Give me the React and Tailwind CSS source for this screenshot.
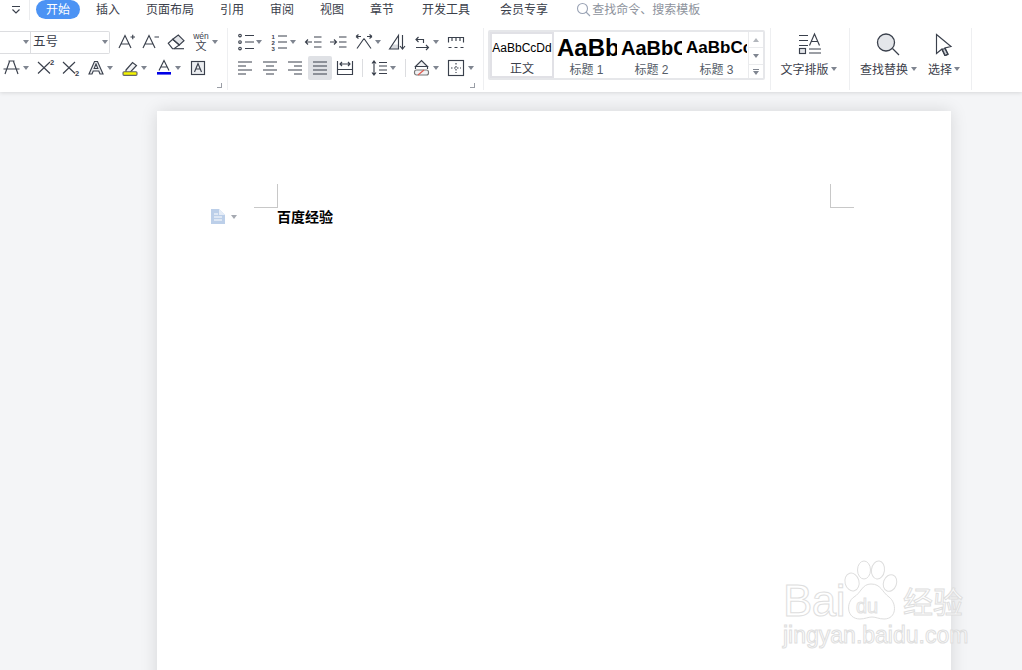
import React from 'react';

const INK = '#3a404c';

function Caret({ className = '' }) {
    return <span className={`block w-0 h-0 shrink-0 border-x-[3px] border-t-[4px] border-x-transparent border-t-[#7f8590] ${className}`} />;
}

function Icon({ w = 18, h = 18, className = '', children }) {
    return (
        <svg width={w} height={h} viewBox={`0 0 ${w} ${h}`} fill="none" stroke={INK} strokeWidth="1.15" className={`block shrink-0 ${className}`}>
            {children}
        </svg>
    );
}

function Tab({ children, className = '' }) {
    return <span className={`h-[19px] flex items-center whitespace-nowrap ${className}`}>{children}</span>;
}

function Row({ children, className = '' }) {
    return <div className={`flex items-center h-[26px] ${className}`}>{children}</div>;
}

function StyleCard({ sample, label, sampleClass }) {
    return (
        <div className="flex flex-col items-center shrink-0 px-[2px] w-[65px] h-[46px]">
            <div className={`w-full h-[30px] shrink-0 pt-[2px] overflow-hidden whitespace-nowrap flex items-center text-black ${sampleClass}`}>{sample}</div>
            <div className="h-[15px] flex items-center text-[12px] text-[#555d68]">{label}</div>
        </div>
    );
}

function Watermark() {
    return (
        <div className="absolute left-[783px] top-[560px] w-[190px] h-[92px] select-none [font-family:'Liberation_Sans','Noto_Sans_CJK_SC',sans-serif] text-[#ffffffd0] [-webkit-text-stroke:1px_#dedede]">
            <div className="flex items-start h-[62px]">
                <span className="mt-[16px] text-[44px] leading-[50px] tracking-[-0.5px]">Bai</span>
                <svg width="58" height="62" viewBox="0 0 58 62" fill="#ffffffd0" stroke="#dedede" strokeWidth="1" className="block shrink-0 ml-[-2px]">
                    <ellipse cx="9" cy="22" rx="7" ry="9" transform="rotate(-15 9 22)" />
                    <ellipse cx="21" cy="10" rx="6.5" ry="9" />
                    <ellipse cx="35" cy="10" rx="6.5" ry="9" transform="rotate(8 35 10)" />
                    <ellipse cx="47" cy="23" rx="6.5" ry="8.5" transform="rotate(20 47 23)" />
                    <path d="M28 24c-9 0-10 9-17 13-8 5-8 22 6 22 5 0 8-2 12-2s7 2 12 2c13 0 13-16 5-22-7-5-8-13-18-13z" />
                    <text x="13" y="53" fontSize="20" fontFamily="Liberation Sans" stroke="#e2e2e2" fill="#ffffff">du</text>
                </svg>
                <span className="mt-[25px] ml-[2px] text-[30px] leading-[36px] whitespace-nowrap">经验</span>
            </div>
            <div className="text-[23px] leading-[26px] whitespace-nowrap">jingyan.baidu.com</div>
        </div>
    );
}

export default function App() {
    return (
        <div className="relative w-[1022px] h-[670px] overflow-hidden bg-[#f4f5f7] text-[12px] text-[#3b404b] [font-family:'Liberation_Sans','Noto_Sans_CJK_SC',sans-serif]">
            <header className="relative z-10 h-[92px] bg-white shadow-[0_1px_4px_rgba(0,0,0,0.12)]">
                {/* tabs */}
                <div className="flex items-start h-[28px]">
                    <div className="w-[30px] h-[20px] flex items-center justify-center border-r border-[#ebecee] pl-[2px]">
                        <Icon w={10} h={10}>
                            <path d="M1 1.500h8M1.500 4.500L5 8l3.500-3.500" />
                        </Icon>
                    </div>
                    <Tab className="ml-[6px] w-[44px] justify-center rounded-full bg-[#4c93f4] text-white">开始</Tab>
                    <Tab className="ml-[16px]">插入</Tab>
                    <Tab className="ml-[26px]">页面布局</Tab>
                    <Tab className="ml-[26px]">引用</Tab>
                    <Tab className="ml-[26px]">审阅</Tab>
                    <Tab className="ml-[26px]">视图</Tab>
                    <Tab className="ml-[26px]">章节</Tab>
                    <Tab className="ml-[28px]">开发工具</Tab>
                    <Tab className="ml-[30px]">会员专享</Tab>
                    <Tab className="ml-[28px] text-[#8d929c]">
                        <svg width="15" height="15" viewBox="0 0 15 15" fill="none" stroke="#9aa3b5" strokeWidth="1.1" className="block mr-[1px]">
                            <circle cx="6.500" cy="6.500" r="5" />
                            <path d="M10 10l4 4" />
                        </svg>
                        查找命令、搜索模板
                    </Tab>
                </div>

                {/* ribbon */}
                <div className="flex h-[62px]">
                    {/* font group */}
                    <div className="relative w-[228px] shrink-0 border-r border-[#eeeff1] pt-[1px]">
                        <Row>
                            <div className="flex items-center w-[110px] h-[23px] border border-l-0 border-[#dcdde0] rounded-r-[2px]">
                                <div className="w-[31px] h-full flex items-center border-r border-[#dcdde0] pl-[23px]">
                                    <Caret />
                                </div>
                                <span className="ml-[2px] w-[65px] text-[12.5px]">五号</span>
                                <Caret className="ml-[4px]" />
                            </div>
                            <Icon w={20} h={20} className="ml-[6px]">
                                <path d="M3 16L9 3.500 15 16M5.200 12h7.600M14.500 5h4.500M16.750 2.800v4.500" />
                            </Icon>
                            <Icon w={20} h={20} className="ml-[4px]">
                                <path d="M3 16L9 3.500 15 16M5.200 12h7.600M14.500 5h4.500" />
                            </Icon>
                            <Icon w={20} h={20} className="ml-[6px]">
                                <path d="M6.700 7.300L12.300 3 18 8.700l-4.700 4.300z" fill="#e4e6ea" />
                                <path d="M2.300 11.300l4.400-4 6.600 5.700L8 16.700H6.500z" />
                                <path d="M8 16.700h10" />
                            </Icon>
                            <div className="ml-[5px] w-[20px] flex flex-col items-center leading-none text-[#3a404c]">
                                <span className="text-[8.5px] leading-[9px]">wén</span>
                                <span className="text-[11px] leading-[11px]">文</span>
                            </div>
                            <Caret className="ml-[1px]" />
                        </Row>
                        <Row>
                            <Icon w={20} h={20} className="ml-[1px]">
                                <path d="M7.500 3h6M8.500 3.500L4 16M12.500 3.500L17 16M2.500 11h16" />
                            </Icon>
                            <Caret className="ml-[2px]" />
                            <Icon w={20} h={20} className="ml-[6px]">
                                <path d="M3 4l12 11.500M15 4L3 15.500" />
                                <text x="15" y="7" fontSize="7.500" fontWeight="700" fill={INK} stroke="none">2</text>
                            </Icon>
                            <Icon w={20} h={20} className="ml-[6px]">
                                <path d="M2 4l12 11.500M14 4L2 15.500" />
                                <text x="14" y="17.500" fontSize="7.500" fontWeight="700" fill={INK} stroke="none">2</text>
                            </Icon>
                            <Icon w={20} h={20} className="ml-[5px]">
                                <path d="M3 16L8.500 3.500h3L17 16h-3l-1.200-3H7.200L6 16zM8.200 10.500h3.600L10 6z" fill="#eceef1" />
                            </Icon>
                            <Caret className="ml-[1px]" />
                            <Icon w={20} h={20} className="ml-[7px]">
                                <path d="M6 12l6.500-7.500 4 3-6.500 7H6z" fill="#f1f2f4" />
                                <rect x="3" y="13.700" width="14" height="3.600" rx="1" fill="#f5f500" stroke="#666" />
                            </Icon>
                            <Caret className="ml-[1px]" />
                            <Icon w={20} h={20} className="ml-[6px]">
                                <path d="M6 12.500L11 2.500l5 10M7.800 9h6.400" />
                                <path d="M4 15.300h14" stroke="#0000e6" strokeWidth="2.600" />
                            </Icon>
                            <Caret className="ml-[2px]" />
                            <Icon w={20} h={20} className="ml-[7px]">
                                <rect x="3.500" y="3.500" width="13" height="13" fill="#eceef1" />
                                <path d="M6.500 14L10 5.500l3.500 8.500M7.700 11h4.600" />
                            </Icon>
                        </Row>
                        <span className="absolute right-[5px] bottom-[2px] w-[5px] h-[5px] border-r border-b border-[#9a9ea6]" />
                    </div>

                    {/* paragraph group */}
                    <div className="relative w-[256px] shrink-0 border-r border-[#eeeff1] pt-[1px]">
                        <Row>
                            <Icon className="ml-[9px]">
                                <circle cx="3" cy="2.500" r="1.300" />
                                <circle cx="3" cy="9" r="1.300" />
                                <circle cx="3" cy="15.500" r="1.300" />
                                <path d="M8 2.500h9M8 9h9M8 15.500h9" />
                            </Icon>
                            <Caret className="ml-[1px]" />
                            <Icon className="ml-[8px]">
                                <text x="1.500" y="5.500" fontSize="6" fontWeight="700" fill={INK} stroke="none">1</text>
                                <text x="1.500" y="11.500" fontSize="6" fontWeight="700" fill={INK} stroke="none">2</text>
                                <text x="1.500" y="17.500" fontSize="6" fontWeight="700" fill={INK} stroke="none">3</text>
                                <path d="M8 3h9M8 9h9M8 15h9" />
                            </Icon>
                            <Caret className="ml-[2px]" />
                            <Icon className="ml-[8px]">
                                <path d="M10 4h7.500M10 9h7.500M10 14h7.500M1.500 9h6.500M4 6.500L1.500 9 4 11.500" />
                            </Icon>
                            <Icon className="ml-[7px]">
                                <path d="M10 4h7.500M10 9h7.500M10 14h7.500M1 9h6.500M5 6.500L7.500 9 5 11.500" />
                            </Icon>
                            <Icon className="ml-[8px]">
                                <path d="M1 3.500h5M12 3.500h5M1 3.500l2.500-2M1 3.500l2.500 2M17 3.500l-2.500-2M17 3.500l-2.500 2M9 5.500L2 15.500M9 5.500l7 10" />
                            </Icon>
                            <Caret className="ml-[2px]" />
                            <Icon className="ml-[7px]">
                                <path d="M4.500 11.500h6V16H1.500z" fill="#d9dbdf" stroke="none" />
                                <path d="M1.500 16L10.500 2.500V16zM14.500 2v13.500M12 13l2.500 3 2.500-3" />
                            </Icon>
                            <Icon className="ml-[7px]">
                                <path d="M3 6.500h7.500V10M5.500 4L3 6.500 5.500 9M3 14.500h12.500M13 12l2.500 2.500L13 17" />
                            </Icon>
                            <Caret className="ml-[2px]" />
                            <Icon className="ml-[8px]">
                                <path d="M1.500 9.500v-5h15v5M5 5v3M9 5v3M13 5v3M1.500 14.500h3M7.500 14.500h3M13.500 14.500h3" />
                            </Icon>
                        </Row>
                        <Row>
                            <Icon className="ml-[8px]">
                                <path d="M2 3h14M2 7h8M2 11h14M2 15h8" />
                            </Icon>
                            <Icon className="ml-[7px]">
                                <path d="M2 3h14M5 7h8M2 11h14M5 15h8" />
                            </Icon>
                            <Icon className="ml-[7px]">
                                <path d="M2 3h14M8 7h8M2 11h14M8 15h8" />
                            </Icon>
                            <div className="ml-[4px] w-[24px] h-[24px] flex items-center justify-center rounded-[2px] bg-[#dfe1e5]">
                                <Icon>
                                    <path d="M2 3h14M2 7h14M2 11h14M2 15h14" />
                                </Icon>
                            </div>
                            <Icon className="ml-[4px]">
                                <path d="M1.500 2v14M16.500 2v14M4 5h10M6 3L4 5l2 2M12 3l2 2-2 2M1.500 10.500h15M1.500 15.500h15" />
                            </Icon>
                            <span className="ml-[8px] w-px h-[18px] bg-[#dcdde0]" />
                            <Icon className="ml-[7px]">
                                <path d="M4 2v14M2 4.500L4 2l2 2.500M2 13.500L4 16l2-2.500M9 3.500h8M9 7h8M9 11h8M9 14.500h8" />
                            </Icon>
                            <Caret className="ml-[2px]" />
                            <span className="ml-[9px] w-px h-[18px] bg-[#dcdde0]" />
                            <Icon className="ml-[7px]">
                                <path d="M2.500 7.500L8.500 1.500l6 6z" fill="#f1f2f4" />
                                <rect x="1.500" y="11" width="14" height="5" rx="2" fill="#f1f2f4" stroke="#777" />
                                <path d="M5 16l6-5" stroke="#e05a4e" />
                                <path d="M2.500 8v2M14.500 8v2" />
                            </Icon>
                            <Caret className="ml-[2px]" />
                            <Icon className="ml-[8px]">
                                <rect x="1.500" y="1.500" width="15" height="15" />
                                <path d="M9 4v10M4 9h10" strokeDasharray="1.500 1.500" />
                            </Icon>
                            <Caret className="ml-[3px]" />
                        </Row>
                        <span className="absolute right-[8px] bottom-[2px] w-[5px] h-[5px] border-r border-b border-[#9a9ea6]" />
                    </div>

                    {/* styles gallery */}
                    <div className="ml-[4px] w-[277px] h-[50px] mt-[2px] shrink-0 flex border-2 border-[#e6e7ea] rounded-[2px]">
                        <div className="flex w-[258px] overflow-hidden">
                            <div className="w-[64px] h-[46px] shrink-0 flex flex-col items-center border-2 border-[#e1e1e6]">
                                <div className="h-[28px] shrink-0 flex items-center text-[12px] text-black whitespace-nowrap">AaBbCcDd</div>
                                <div className="h-[14px] flex items-center">正文</div>
                            </div>
                            <StyleCard sample="AaBb" label="标题 1" sampleClass="font-bold text-[24px] pl-[1px]" />
                            <StyleCard sample="AaBbCcD" label="标题 2" sampleClass="font-bold text-[20px]" />
                            <StyleCard sample="AaBbCcDd" label="标题 3" sampleClass="font-bold text-[17px]" />
                        </div>
                        <div className="w-[15px] shrink-0 flex flex-col border-l border-[#eaebed]">
                            <div className="h-[16px] flex items-center justify-center border-b border-[#eaebed]">
                                <Caret className="rotate-180 opacity-60" />
                            </div>
                            <div className="h-[17px] flex items-center justify-center border-b border-[#eaebed]">
                                <Caret />
                            </div>
                            <div className="flex-1 flex flex-col items-center justify-center gap-[1px]">
                                <span className="w-[6px] h-px bg-[#7f8590]" />
                                <Caret />
                            </div>
                        </div>
                    </div>

                    {/* text layout */}
                    <div className="ml-[5px] w-[80px] shrink-0 border-x border-[#eeeff1] pl-[9px] pt-[2px]">
                        <div className="w-[57px] flex flex-col items-center">
                            <div className="h-[27px] flex items-center">
                                <Icon w={26} h={24}>
                                    <path d="M3 3.500h9M3 8.500h9M3 13.500h9" />
                                    <path d="M13.500 13.500L18.500 2l5 11.500M15.300 9.500h6.400" />
                                    <rect x="3.500" y="16.500" width="6" height="5" fill="#e4e6ea" />
                                    <path d="M13 17h12M13 21h12" />
                                </Icon>
                            </div>
                            <div className="h-[26px] flex items-center whitespace-nowrap">
                                文字排版
                                <Caret className="ml-[2px] mb-[3px]" />
                            </div>
                        </div>
                    </div>

                    {/* find and select */}
                    <div className="w-[122px] shrink-0 border-r border-[#eeeff1] pl-[10px] pt-[2px] flex">
                        <div className="w-[57px] flex flex-col items-center">
                            <div className="h-[27px] flex items-center">
                                <Icon w={26} h={26} className="mr-[4px]">
                                    <circle cx="12" cy="11.500" r="8.500" fill="#e4e6ea" strokeWidth="1.300" />
                                    <path d="M18.500 17.500l6.500 6.500" strokeWidth="1.300" />
                                </Icon>
                            </div>
                            <div className="h-[26px] flex items-center whitespace-nowrap">
                                查找替换
                                <Caret className="ml-[3px] mb-[3px]" />
                            </div>
                        </div>
                        <div className="ml-[11px] w-[32px] flex flex-col items-center">
                            <div className="h-[27px] flex items-center">
                                <Icon w={18} h={24}>
                                    <path d="M10 16.500l3 6-3 1.200-3-6.200z" fill="#c9ccd2" />
                                    <path d="M1.500 2.500L16 14.500l-6 1.500 3 6-3 1.500-3-6.500-5.500 4.500z" />
                                </Icon>
                            </div>
                            <div className="h-[26px] flex items-center whitespace-nowrap">
                                选择
                                <Caret className="ml-[2px] mb-[3px]" />
                            </div>
                        </div>
                    </div>
                </div>
            </header>

            {/* document */}
            <main className="pt-[19px] pl-[157px]">
                <div className="w-[794px] h-[600px] bg-white shadow-[0_0_16px_rgba(0,0,0,0.13)] px-[97px] pt-[73px]">
                    <div className="flex justify-between">
                        <span className="w-[24px] h-[24px] border-r border-b border-[#c8c8c8]" />
                        <span className="w-[24px] h-[24px] border-l border-b border-[#c8c8c8]" />
                    </div>
                    <div className="relative pl-[23px] h-[18px] flex items-center text-[14px] font-bold text-black leading-none">
                        百度经验
                        <div className="absolute left-[-43px] top-[1px] flex items-center">
                            <svg width="14" height="15" viewBox="0 0 14 15" className="block">
                                <path d="M0 0h8l6 6v9H0z" fill="#bccfe9" />
                                <path d="M8 0l6 6H8z" fill="#e6edf7" />
                                <path d="M3 5h4M3 8h8M3 11h8" stroke="#ffffff" />
                            </svg>
                            <Caret className="ml-[6px] opacity-70" />
                        </div>
                    </div>
                </div>
            </main>

            <Watermark />
        </div>
    );
}
